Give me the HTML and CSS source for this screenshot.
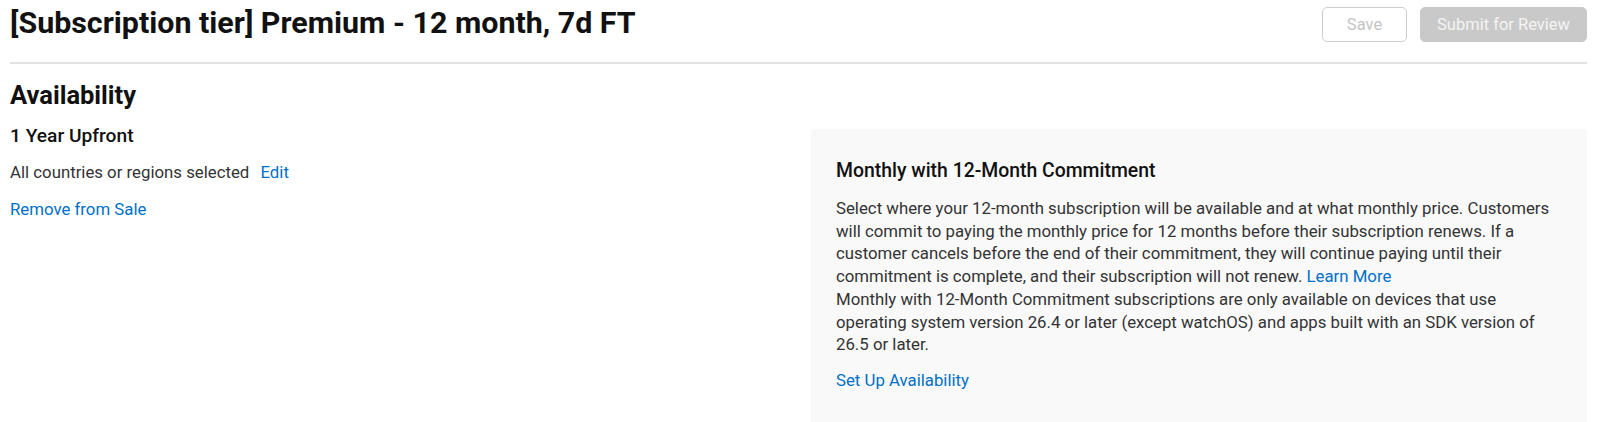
FILE: index.html
```html
<!DOCTYPE html>
<html lang="en">
<head>
  <meta charset="UTF-8" />
  <title>Subscription Availability</title>
  <link rel="stylesheet" href="styles.css">
</head>
<body>
  <div class="page">
    <header class="page-header">
      <h1>[Subscription tier] Premium - 12 month, 7d FT</h1>
      <div class="actions">
        <button class="btn btn-outline" disabled>Save</button>
        <button class="btn btn-primary" disabled>Submit for Review</button>
      </div>
    </header>

    <section class="availability">
      <h2>Availability</h2>
      <div class="columns">
        <div class="current">
          <h3>1 Year Upfront</h3>
          <p class="regions">All countries or regions selected <a href="#" class="link">Edit</a></p>
          <p><a href="#" class="link">Remove from Sale</a></p>
        </div>

        <aside class="panel">
          <h3>Monthly with 12-Month Commitment</h3>
          <p class="intro">Select where your 12-month subscription will be available and at what monthly price. Customers will commit to paying the monthly price for 12 months before their subscription renews. If a<br>
            customer cancels before the end of their commitment, they will continue paying until their<br>
            commitment is complete, and their subscription will not renew. <a href="#" class="link">Learn More</a></p>
          <p class="note">Monthly with 12-Month Commitment subscriptions are only available on devices that use operating system version 26.4 or later (except watchOS) and apps built with an SDK version of 26.5 or later.</p>
          <p class="setup"><a href="#" class="link">Set Up Availability</a></p>
        </aside>
      </div>
    </section>
  </div>
</body>
</html>
```

FILE: styles.css
```css
:root {
  --text: #333;
  --heading: #111;
  --link: #0070c9;
  --line: #e2e2e2;
  --panel-bg: #f9f9f9;
}

* {
  box-sizing: border-box;
}

body {
  margin: 0;
  font-family: Roboto, "Liberation Sans", sans-serif;
  color: var(--text);
  background: #fff;
  overflow: hidden;
}

.page {
  padding: 7px 13px 0 10px;
}

.page-header {
  display: flex;
  justify-content: space-between;
  align-items: flex-start;
  padding-bottom: 20px;
  border-bottom: 2px solid var(--line);
}

h1 {
  margin: -3px 0 0;
  font-size: 30.4px;
  line-height: 38px;
  font-weight: 700;
  color: var(--heading);
}

.actions {
  display: flex;
  gap: 13px;
}

.btn {
  height: 35px;
  border-radius: 5px;
  font-family: inherit;
  font-size: 16.5px;
  padding: 0 10px;
}

.btn-outline {
  width: 85px;
  background: #fff;
  border: 1px solid #cdcdcd;
  color: #c4c4c4;
}

.btn-primary {
  width: 167px;
  background: #c9c9c9;
  border: 1px solid #c9c9c9;
  color: #f4f4f4;
}

h2 {
  margin: 16px 0 16px;
  font-size: 25.5px;
  line-height: 30px;
  font-weight: 700;
  color: var(--heading);
}

.columns {
  display: grid;
  grid-template-columns: 801px 1fr;
}

h3 {
  margin: 0;
  font-size: 19.2px;
  line-height: 20px;
  font-weight: 500;
  color: var(--heading);
}

p {
  margin: 0;
  font-size: 16.8px;
  line-height: 20px;
}

.link {
  color: var(--link);
  text-decoration: none;
}

.current h3 {
  margin-bottom: 16px;
}

.regions {
  margin-bottom: 17px;
}

.regions .link {
  margin-left: 7px;
}

.panel {
  background: var(--panel-bg);
  padding: 31px 18px 60px 25px;
  margin-top: 3px;
}

.panel h3 {
  font-size: 19.4px;
  line-height: 22px;
}

.panel p {
  line-height: 22.5px;
}

.intro {
  margin-top: 15px;
}

.note {
  margin-top: 1px;
}

.setup {
  margin-top: 13px;
}
```
